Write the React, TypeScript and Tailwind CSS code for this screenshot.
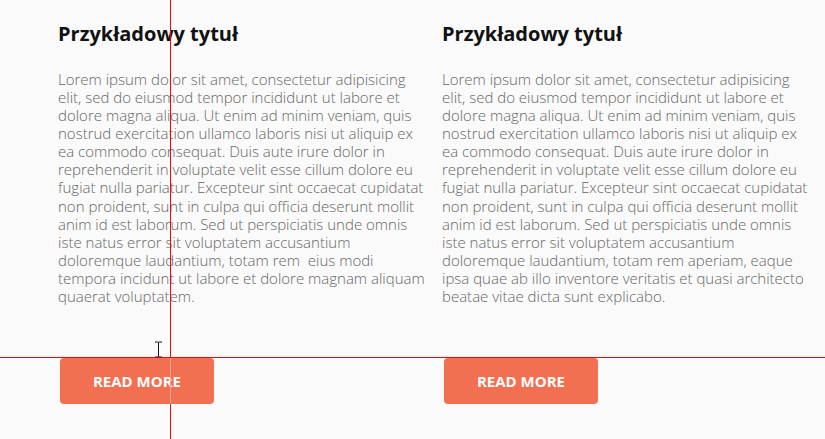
const body =
  'Lorem ipsum dolor sit amet, consectetur adipisicing elit, sed do eiusmod tempor incididunt ut labore et dolore magna aliqua. Ut enim ad minim veniam, quis nostrud exercitation ullamco laboris nisi ut aliquip ex ea commodo consequat. Duis aute irure dolor in reprehenderit in voluptate velit esse cillum dolore eu fugiat nulla pariatur. Excepteur sint occaecat cupidatat non proident, sunt in culpa qui officia deserunt mollit anim id est laborum. Sed ut perspiciatis unde omnis iste natus error sit voluptatem accusantium doloremque laudantium, totam rem'

const cards = [
  { text: body + '\u00a0 eius modi tempora incidunt ut labore et dolore magnam aliquam quaerat voluptatem.' },
  { text: body + ' aperiam, eaque ipsa quae ab illo inventore veritatis et quasi architecto beatae vitae dicta sunt explicabo.' },
]

function Card({ text }: { text: string }) {
  return (
    <div className="flex w-[369px] flex-col">
      <h2 className="text-[20px] font-bold leading-[28px] text-[#111]">Przykładowy tytuł</h2>
      <p className="mt-[22px] h-[236px] text-[15px] font-light leading-[18.08px] text-[#666]">{text}</p>
      <button className="mt-[52px] ml-[2px] h-[46px] w-[154px] rounded-[4px] bg-[#f36f51] text-[15px] font-bold text-white">
        READ MORE
      </button>
    </div>
  )
}

export default function App() {
  return (
    <div className="relative h-[439px] w-[825px] overflow-hidden bg-[#fafafa]" style={{ fontFamily: '"Open Sans", sans-serif' }}>
      <div className="flex gap-[15px] pt-[20px] pl-[58px]">
        {cards.map((c, i) => (
          <Card key={i} text={c.text} />
        ))}
      </div>

      {/* guide lines */}
      <div className="absolute top-0 h-[358px] left-[170px] w-px bg-[#ff0000]" />
      <div className="absolute top-[358px] h-[46px] left-[170px] w-px bg-[#f8a091]" />
      <div className="absolute top-[404px] bottom-0 left-[170px] w-px bg-[#ff0000]" />
      <div className="absolute left-0 right-0 top-[357px] h-px bg-[#ff0000]" />

      {/* text cursor */}
      <svg className="absolute left-[154px] top-[341px]" width="9" height="17" viewBox="0 0 9 17">
        <path d="M1 1h2.5c.6 0 1 .4 1 1v13c0 .6.4 1 1 1H8M8 1H5.5c-.6 0-1 .4-1 1M4.5 15c0 .6-.4 1-1 1H1" fill="none" stroke="#111" strokeWidth="1" />
        <path d="M4.5 2v13" stroke="#111" strokeWidth="1" />
      </svg>
    </div>
  )
}
